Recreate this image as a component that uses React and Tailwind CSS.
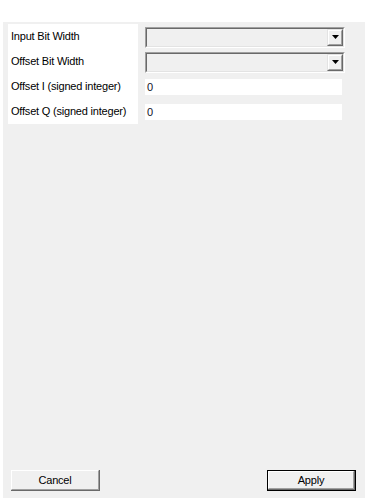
import React from "react";

const FONT = { fontFamily: '"Liberation Sans", Arial, sans-serif' };

const LABELS = [
  "Input Bit Width",
  "Offset Bit Width",
  "Offset I (signed integer)",
  "Offset Q (signed integer)",
];

function ComboBox() {
  // classic sunken 3d border + raised dropdown button
  return (
    <div className="w-[200px] h-[21px] border-t border-l border-t-[#a0a0a0] border-l-[#a0a0a0] border-b border-r border-b-white border-r-white">
      <div className="h-full w-full border-t border-l border-t-[#696969] border-l-[#696969] border-b border-r border-b-[#e3e3e3] border-r-[#e3e3e3] bg-[#f0f0f0] flex justify-end">
        <div className="w-[16px] h-[17px] border-t border-l border-t-[#e3e3e3] border-l-[#e3e3e3] border-b border-r border-b-[#696969] border-r-[#696969]">
          <div className="h-full w-full border-t border-l border-t-white border-l-white border-b border-r border-b-[#a0a0a0] border-r-[#a0a0a0] bg-[#f0f0f0] flex items-center justify-center">
            <svg width="7" height="4" viewBox="0 0 7 4">
              <polygon points="0,0 7,0 3.5,4" fill="#000" />
            </svg>
          </div>
        </div>
      </div>
    </div>
  );
}

function TextBox({ value }) {
  return (
    <div className="w-[197px] h-[16px] bg-white pl-[2px] flex items-center text-[11px] tracking-[-0.2px] text-[#101028]">
      {value}
    </div>
  );
}

function Button({ label, isDefault }) {
  const inner = (
    <div className="h-full w-full border-t border-l border-t-white border-l-white border-b border-r border-b-[#a0a0a0] border-r-[#a0a0a0] bg-[#f0f0f0] flex items-center justify-center text-[11px] tracking-[-0.2px] text-black">
      {label}
    </div>
  );
  if (isDefault) {
    return (
      <div className="w-[89px] h-[21px] border border-black">
        <div className="h-full w-full border-b border-r border-b-[#696969] border-r-[#696969]">
          {inner}
        </div>
      </div>
    );
  }
  return (
    <div className="w-[89px] h-[21px] border-b border-r border-b-[#696969] border-r-[#696969]">
      {inner}
    </div>
  );
}

export default function App() {
  return (
    <div className="w-[368px] h-[501px] bg-white overflow-hidden" style={FONT}>
      <div className="ml-[3px] mt-[22px] w-[362px] h-[476px] bg-[#f0f0f0] flex flex-col">
        {/* Parameter grid */}
        <div className="flex mt-[2px] ml-[5px] gap-[7px]">
          <div className="w-[130px] bg-white flex flex-col">
            {LABELS.map((l) => (
              <div key={l} className="h-[25px] pl-[3px] flex items-center text-[11px] tracking-[-0.2px] text-black whitespace-nowrap">
                {l}
              </div>
            ))}
          </div>
          <div className="flex flex-col">
            <div className="h-[25px] pt-[1px] flex items-center">
              <ComboBox />
            </div>
            <div className="h-[25px] pt-[1px] flex items-center">
              <ComboBox />
            </div>
            <div className="h-[25px] pt-[1px] flex items-center">
              <TextBox value="0" />
            </div>
            <div className="h-[25px] pt-[1px] flex items-center">
              <TextBox value="0" />
            </div>
          </div>
        </div>

        <div className="flex-1" />

        {/* Buttons */}
        <div className="flex justify-between pl-[8px] pr-[9px] mb-[7px]">
          <Button label="Cancel" />
          <Button label="Apply" isDefault />
        </div>
      </div>
    </div>
  );
}
